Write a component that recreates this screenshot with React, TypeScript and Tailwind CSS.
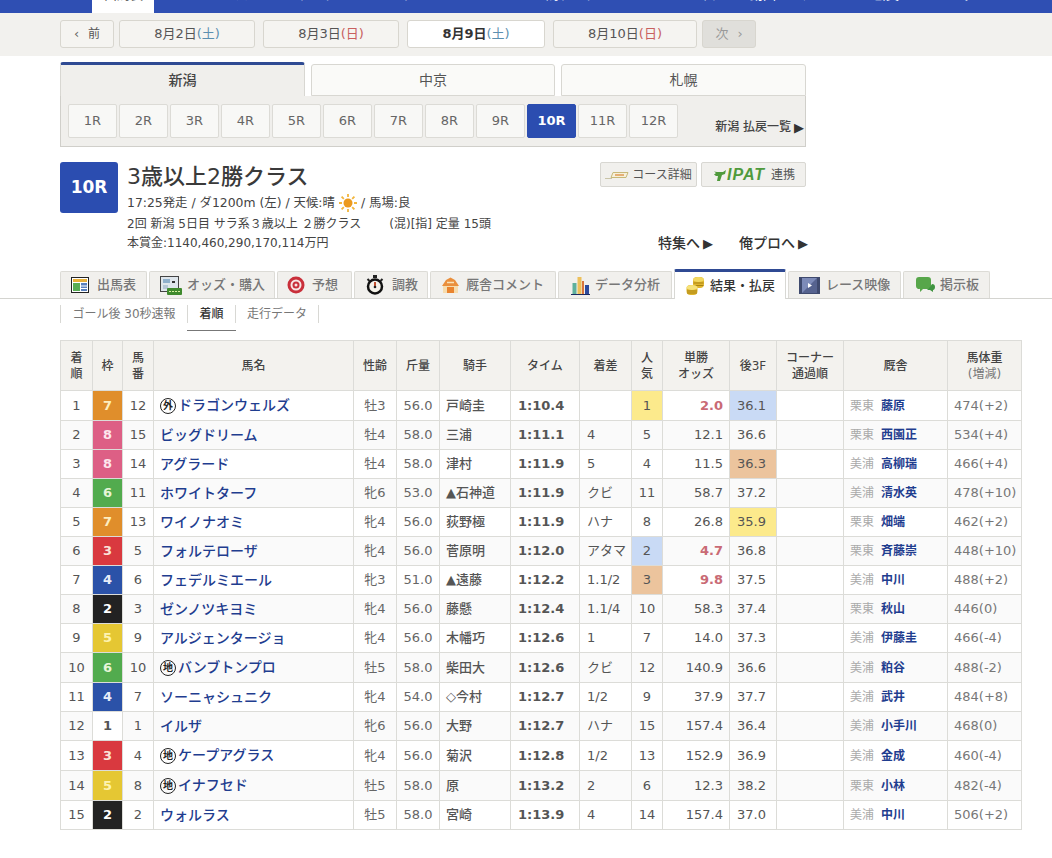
import type { ReactNode } from "react";

const navItems = [
  { label: "TOP", cls: "w-[92px] pl-[68px] text-[12px]" },
  { label: "出馬表", cls: "w-[62px] pl-[12px] bg-white text-[#555]" },
  { label: "レース", cls: "w-[144px] pl-[56px]" },
  { label: "データ", cls: "w-[90px]" },
  { label: "コラム", cls: "w-[158px]" },
  { label: "馬データ", cls: "w-[72px]" },
  { label: "POG", cls: "w-[72px] text-[12px]" },
  { label: "一口", cls: "w-[60px]" },
  { label: "動画", cls: "w-[46px]" },
  { label: "マイページ", cls: "w-[77px]" },
  { label: "会員", cls: "w-[77px]" },
  { label: "ログイン", cls: "w-[60px]" },
];

const raceNums = ["1R", "2R", "3R", "4R", "5R", "6R", "7R", "8R", "9R", "10R", "11R", "12R"];

const wakuColor: Record<number, string> = {
  1: "bg-white text-[#444]",
  2: "bg-[#222222] text-white",
  3: "bg-[#d9393f] text-[#fbe3d8]",
  4: "bg-[#2b52a8] text-[#e6ecf8]",
  5: "bg-[#e5c733] text-[#fdf3b0]",
  6: "bg-[#52ab4e] text-[#e7f5d8]",
  7: "bg-[#e08e2b] text-[#fdeec0]",
  8: "bg-[#dd5f85] text-[#fde6ec]",
};

type Row = {
  rank: number;
  waku: number;
  num: number;
  mark?: string;
  name: string;
  sex: string;
  kg: string;
  jockey: string;
  time: string;
  diff: string;
  pop: number;
  odds: string;
  last: string;
  center: string;
  trainer: string;
  weight: string;
  tall?: boolean;
};

const rows: Row[] = [
  { rank: 1, waku: 7, num: 12, mark: "外", name: "ドラゴンウェルズ", sex: "牡3", kg: "56.0", jockey: "戸崎圭", time: "1:10.4", diff: "", pop: 1, odds: "2.0", last: "36.1", center: "栗東", trainer: "藤原", weight: "474(+2)", tall: true },
  { rank: 2, waku: 8, num: 15, name: "ビッグドリーム", sex: "牡4", kg: "58.0", jockey: "三浦", time: "1:11.1", diff: "4", pop: 5, odds: "12.1", last: "36.6", center: "栗東", trainer: "西園正", weight: "534(+4)" },
  { rank: 3, waku: 8, num: 14, name: "アグラード", sex: "牡4", kg: "58.0", jockey: "津村", time: "1:11.9", diff: "5", pop: 4, odds: "11.5", last: "36.3", center: "美浦", trainer: "高柳瑞", weight: "466(+4)" },
  { rank: 4, waku: 6, num: 11, name: "ホワイトターフ", sex: "牝6", kg: "53.0", jockey: "▲石神道", time: "1:11.9", diff: "クビ", pop: 11, odds: "58.7", last: "37.2", center: "美浦", trainer: "清水英", weight: "478(+10)" },
  { rank: 5, waku: 7, num: 13, name: "ワイノナオミ", sex: "牝4", kg: "56.0", jockey: "荻野極", time: "1:11.9", diff: "ハナ", pop: 8, odds: "26.8", last: "35.9", center: "栗東", trainer: "畑端", weight: "462(+2)" },
  { rank: 6, waku: 3, num: 5, name: "フォルテローザ", sex: "牝4", kg: "56.0", jockey: "菅原明", time: "1:12.0", diff: "アタマ", pop: 2, odds: "4.7", last: "36.8", center: "栗東", trainer: "斉藤崇", weight: "448(+10)" },
  { rank: 7, waku: 4, num: 6, name: "フェデルミエール", sex: "牝3", kg: "51.0", jockey: "▲遠藤", time: "1:12.2", diff: "1.1/2", pop: 3, odds: "9.8", last: "37.5", center: "美浦", trainer: "中川", weight: "488(+2)" },
  { rank: 8, waku: 2, num: 3, name: "ゼンノツキヨミ", sex: "牝4", kg: "56.0", jockey: "藤懸", time: "1:12.4", diff: "1.1/4", pop: 10, odds: "58.3", last: "37.4", center: "栗東", trainer: "秋山", weight: "446(0)" },
  { rank: 9, waku: 5, num: 9, name: "アルジェンタージョ", sex: "牝4", kg: "56.0", jockey: "木幡巧", time: "1:12.6", diff: "1", pop: 7, odds: "14.0", last: "37.3", center: "美浦", trainer: "伊藤圭", weight: "466(-4)" },
  { rank: 10, waku: 6, num: 10, mark: "地", name: "バンブトンプロ", sex: "牡5", kg: "58.0", jockey: "柴田大", time: "1:12.6", diff: "クビ", pop: 12, odds: "140.9", last: "36.6", center: "美浦", trainer: "粕谷", weight: "488(-2)", tall: true },
  { rank: 11, waku: 4, num: 7, name: "ソーニャシュニク", sex: "牝4", kg: "54.0", jockey: "◇今村", time: "1:12.7", diff: "1/2", pop: 9, odds: "37.9", last: "37.7", center: "美浦", trainer: "武井", weight: "484(+8)" },
  { rank: 12, waku: 1, num: 1, name: "イルザ", sex: "牝6", kg: "56.0", jockey: "大野", time: "1:12.7", diff: "ハナ", pop: 15, odds: "157.4", last: "36.4", center: "美浦", trainer: "小手川", weight: "468(0)" },
  { rank: 13, waku: 3, num: 4, mark: "地", name: "ケープアグラス", sex: "牝4", kg: "56.0", jockey: "菊沢", time: "1:12.8", diff: "1/2", pop: 13, odds: "152.9", last: "36.9", center: "美浦", trainer: "金成", weight: "460(-4)", tall: true },
  { rank: 14, waku: 5, num: 8, mark: "地", name: "イナフセド", sex: "牡5", kg: "58.0", jockey: "原", time: "1:13.2", diff: "2", pop: 6, odds: "12.3", last: "38.2", center: "栗東", trainer: "小林", weight: "482(-4)", tall: true },
  { rank: 15, waku: 2, num: 2, name: "ウォルラス", sex: "牡5", kg: "58.0", jockey: "宮崎", time: "1:13.9", diff: "4", pop: 14, odds: "157.4", last: "37.0", center: "美浦", trainer: "中川", weight: "506(+2)" },
];

const popBg: Record<number, string> = { 1: "bg-[#fcea8c]", 2: "bg-[#c9daf5]", 3: "bg-[#ecc49d]" };
const lastBg: Record<string, string> = { "36.1": "bg-[#c9daf5]", "36.3": "bg-[#ecc49d]", "35.9": "bg-[#fcea8c]" };

function DateBtn({ w, children, active }: { w: string; children: ReactNode; active?: boolean }) {
  return (
    <div
      className={`${w} flex h-[28px] items-center justify-center rounded-[3px] border border-[#d8d6cf] text-[13px] ${
        active ? "bg-white font-bold text-[#333]" : "bg-[#f5f4f1] text-[#555]"
      }`}
    >
      {children}
    </div>
  );
}

function Sat() {
  return <span className="font-normal text-[#5b8fb0]">(土)</span>;
}
function Sun() {
  return <span className="font-normal text-[#c8605f]">(日)</span>;
}

function TabIcon({ kind }: { kind: string }) {
  if (kind === "table")
    return (
      <svg width="18" height="16" viewBox="0 0 18 16">
        <rect x="0.5" y="0.5" width="17" height="15" fill="#fff" stroke="#222" />
        <rect x="2" y="2" width="14" height="3" fill="#e8b13a" />
        <rect x="2" y="6" width="7" height="8" fill="#58ad55" />
        <rect x="10" y="6" width="6" height="8" fill="#5a80bd" />
        <path d="M10 9h6M10 11.5h6" stroke="#fff" />
      </svg>
    );
  if (kind === "odds")
    return (
      <svg width="22" height="19" viewBox="0 0 22 19">
        <rect x="0.5" y="0.5" width="18" height="15" fill="#dfe6ec" stroke="#444" />
        <rect x="3" y="3" width="7" height="4" fill="#8fb0cc" />
        <rect x="12" y="5" width="3" height="2" fill="#333" />
        <rect x="3" y="9" width="5" height="4" fill="#b5c6d6" />
        <rect x="7" y="12" width="15" height="7" rx="1" fill="#3f8a2e" />
        <path d="M9 15.5h11" stroke="#d7f0a0" strokeDasharray="2 1" />
      </svg>
    );
  if (kind === "target")
    return (
      <svg width="18" height="18" viewBox="0 0 18 18">
        <circle cx="9" cy="9" r="8.5" fill="#c92f3a" />
        <circle cx="9" cy="9" r="5.5" fill="#f7e6e4" />
        <circle cx="9" cy="9" r="3.5" fill="#c92f3a" />
        <circle cx="9" cy="9" r="1.5" fill="#f7e6e4" />
      </svg>
    );
  if (kind === "watch")
    return (
      <svg width="20" height="20" viewBox="0 0 20 20">
        <rect x="8" y="0" width="4" height="3" fill="#222" />
        <path d="M2.5 4l2 2M17.5 4l-2 2" stroke="#222" strokeWidth="2" />
        <circle cx="10" cy="11.5" r="7" fill="#f5f3ea" stroke="#111" strokeWidth="2.5" />
        <path d="M10 7v5" stroke="#c2502e" strokeWidth="2" />
        <circle cx="10" cy="12" r="1.3" fill="#222" />
      </svg>
    );
  if (kind === "barn")
    return (
      <svg width="19" height="17" viewBox="0 0 19 17">
        <path d="M1 9L5 3 9.5 0.5 14 3 18 9z" fill="#ea8f3c" />
        <rect x="2" y="9" width="15" height="7" fill="#f6dcae" />
        <rect x="6" y="10" width="7" height="6" fill="#e9842f" />
        <path d="M6 5.5h7" stroke="#f9e3b8" strokeWidth="1.5" />
      </svg>
    );
  if (kind === "chart")
    return (
      <svg width="19" height="19" viewBox="0 0 19 19">
        <rect x="1.5" y="7" width="4" height="11" fill="#5eb09c" />
        <rect x="6.5" y="1" width="4" height="17" fill="#edc05a" />
        <rect x="11" y="5" width="2" height="13" fill="#d9743c" />
        <rect x="14" y="9" width="4" height="9" fill="#2e4a9b" />
        <path d="M0 18.5h19" stroke="#1c2c60" />
      </svg>
    );
  if (kind === "coins")
    return (
      <svg width="19" height="19" viewBox="0 0 19 19">
        <rect x="7" y="1" width="11" height="11" rx="4" fill="#e0b62e" />
        <ellipse cx="12.5" cy="3.5" rx="5.5" ry="2.5" fill="#f2d860" />
        <path d="M7.5 7h10M7.5 9.5h10" stroke="#a98312" />
        <rect x="0.5" y="9" width="11" height="10" rx="4" fill="#e0b62e" />
        <ellipse cx="6" cy="11.5" rx="5.5" ry="2.5" fill="#f6e27a" />
        <path d="M1 15h10M1 17h10" stroke="#a98312" />
      </svg>
    );
  if (kind === "film")
    return (
      <svg width="21" height="17" viewBox="0 0 21 17">
        <rect width="21" height="17" fill="#3f4a6e" />
        <rect x="3" y="1" width="15" height="15" fill="#7d8bb8" />
        <path d="M3 16L18 1v15z" fill="#56638f" />
        <path d="M9 6l4 2.5-4 2.5z" fill="#fff" />
      </svg>
    );
  return (
    <svg width="21" height="18" viewBox="0 0 21 18">
      <path d="M4 1h9a3 3 0 0 1 3 3v6a3 3 0 0 1-3 3H8l-3 3v-3.200A3 3 0 0 1 1 10V4a3 3 0 0 1 3-3z" fill="#57a64a" />
      <path d="M17 8a3 3 0 0 1 3 3c0 2-1 3-2 3v2l-3-2h-3l3-3z" fill="#3f9440" />
    </svg>
  );
}

const tabs = [
  { label: "出馬表", icon: "table", cls: "w-[87px]", gap: "gap-[8px] pl-[10px]" },
  { label: "オッズ・購入", icon: "odds", cls: "w-[126px]", gap: "gap-[5px] pl-[10px]" },
  { label: "予想", icon: "target", cls: "w-[75px]", gap: "gap-[7px] pl-[9px]" },
  { label: "調教", icon: "watch", cls: "w-[74px]", gap: "gap-[7px] pl-[10px]" },
  { label: "厩舎コメント", icon: "barn", cls: "w-[126px]", gap: "gap-[6px] pl-[10px]" },
  { label: "データ分析", icon: "chart", cls: "w-[114px]", gap: "gap-[5px] pl-[12px]" },
];

const tabsAfter = [
  { label: "レース映像", icon: "film", cls: "w-[113px]", gap: "gap-[6px] pl-[10px]" },
  { label: "掲示板", icon: "chat", cls: "w-[87px]", gap: "gap-[4px] pl-[11px]" },
];

function Tab({ t, active }: { t: { label: string; icon: string; cls: string; gap: string }; active?: boolean }) {
  return (
    <div
      className={`${t.cls} ${t.gap} flex items-center rounded-t-[2px] text-[13px] font-medium ${
        active
          ? "-mb-px h-[30px] border-x border-t-[3px] border-[#d8d8d4] border-t-[#2f4a93] bg-white text-[#333]"
          : "h-[27px] border border-b-0 border-[#dcdbd6] bg-[#f1f0ed] text-[#777]"
      }`}
    >
      <TabIcon kind={t.icon} />
      <span>{t.label}</span>
    </div>
  );
}

function Mark({ c }: { c: string }) {
  return (
    <span className="mr-[2px] inline-flex h-[16px] w-[16px] shrink-0 items-center justify-center rounded-full border-[1.5px] border-[#222] text-[10px] font-bold leading-none text-[#222]">
      {c}
    </span>
  );
}

export default function App() {
  const th = "border border-[#dcdcd8] bg-[#f3f2ee] text-center text-[12px] font-medium leading-[16px] text-[#444]";
  const td = "border border-[#dcdcd8] p-0 text-[13px] text-[#555]";
  return (
    <div className="min-h-[858px] w-[1052px] overflow-hidden bg-white font-['DejaVu_Sans','Noto_Sans_CJK_JP',sans-serif] text-[#444]">
      {/* top nav, cut off by the screenshot */}
      <div className="flex h-[13px] overflow-hidden bg-[#2f4fb3] text-[13px] leading-[13px] text-white">
        {navItems.map((n) => (
          <div key={n.label} className={`${n.cls} h-[13px] shrink-0 whitespace-nowrap`}>
            <span className="block -translate-y-[12px]">{n.label}</span>
          </div>
        ))}
      </div>

      {/* date bar */}
      <div className="flex h-[43px] items-start bg-[#f2f1ee] pl-[60px] pt-[7px]">
        <DateBtn w="w-[54px]">
          <span className="mr-[9px] text-[#666]">‹</span>
          <span className="text-[12px]">前</span>
        </DateBtn>
        <div className="ml-[5px]">
          <DateBtn w="w-[136px]">
            8月2日
            <Sat />
          </DateBtn>
        </div>
        <div className="ml-[8px]">
          <DateBtn w="w-[136px]">
            8月3日
            <Sun />
          </DateBtn>
        </div>
        <div className="ml-[8px]">
          <DateBtn w="w-[138px]" active>
            8月9日
            <Sat />
          </DateBtn>
        </div>
        <div className="ml-[8px]">
          <DateBtn w="w-[144px]">
            8月10日
            <Sun />
          </DateBtn>
        </div>
        <div className="ml-[5px] flex h-[28px] w-[54px] items-center justify-center rounded-[3px] border border-[#d8d6cf] bg-[#e0dfdb] text-[13px] text-[#999]">
          次<span className="ml-[9px]">›</span>
        </div>
      </div>

      {/* venue tabs */}
      <div className="ml-[60px] mt-[7px] w-[746px]">
        <div className="flex h-[33px] items-end">
          <div className="flex h-[34px] w-[245px] items-center justify-center rounded-t-[3px] border-x border-t-[3px] border-x-[#d8d7d2] border-t-[#2f4a93] bg-[#f0efec] text-[14px] font-medium text-[#444]">
            新潟
          </div>
          <div className="ml-[6px] flex h-[32px] w-[244px] items-center justify-center rounded-t-[3px] border border-[#d8d7d2] bg-[#fafaf8] text-[14px] text-[#555]">
            中京
          </div>
          <div className="ml-[6px] flex h-[32px] w-[245px] items-center justify-center rounded-t-[3px] border border-[#d8d7d2] bg-[#fafaf8] text-[14px] text-[#555]">
            札幌
          </div>
        </div>
        <div className="flex h-[51px] gap-[2px] border border-t-0 border-[#d0cfca] bg-[#f0efec] pl-[7px] pt-[8px]">
          {raceNums.map((r) => (
            <div
              key={r}
              className={`flex h-[34px] w-[49px] items-center justify-center rounded-[2px] border text-[13px] ${
                r === "10R"
                  ? "border-[#2b4db0] bg-[#2b4db0] font-bold text-white"
                  : "border-[#dcdbd6] bg-[#f8f8f6] text-[#666]"
              }`}
            >
              {r}
            </div>
          ))}
          <div className="ml-auto mt-[15px] flex h-[16px] items-center pr-[1px] text-[12px] font-medium text-[#444]">
            新潟 払戻一覧
            <span className="ml-[3px] text-[13px] leading-none text-[#333]">▶</span>
          </div>
        </div>
      </div>

      {/* race header */}
      <div className="ml-[60px] mt-[15px] flex h-[92px] w-[746px] items-start">
        <div className="flex h-[51px] w-[58px] shrink-0 items-center justify-center rounded-[3px] bg-[#2b4db0] text-[17px] font-bold text-white">
          10R
        </div>
        <div className="ml-[9px] flex-1">
          <div className="flex h-[28px] items-start justify-between">
            <div className="text-[22px] font-medium leading-[30px] text-[#3a3a3a]">3歳以上2勝クラス</div>
            <div className="flex gap-[4px]">
              <div className="flex h-[25px] w-[97px] items-center justify-center gap-[3px] rounded-[2px] border border-[#d8d7d2] bg-[#f1f0ed] text-[12px] text-[#555]">
                <svg width="24" height="8" viewBox="0 0 24 8">
                  <path d="M0 7.5h7" stroke="#c9c4a8" />
                  <path d="M8 1.5h15l-2 5H6z" fill="#f6f0da" stroke="#c8b878" />
                  <path d="M10 4h9" stroke="#df9a55" strokeWidth="1.5" />
                </svg>
                コース詳細
              </div>
              <div className="flex h-[25px] w-[105px] items-center justify-center gap-[6px] rounded-[2px] border border-[#d8d7d2] bg-[#f1f0ed] text-[12px] text-[#555]">
                <span className="flex items-center">
                  <svg width="15" height="12" viewBox="0 0 15 12">
                    <path d="M0 1l2 1.5 3 0.5h6l3-2-1 4-3 1-2 6H5l1-5H4L2 5.5 4 4z" fill="#4f9a3c" />
                  </svg>
                  <span className="font-['Liberation_Sans',sans-serif] text-[16px] font-bold italic leading-none tracking-[1px] text-[#4f9a3c]">
                    IPAT
                  </span>
                </span>
                連携
              </div>
            </div>
          </div>
          <div className="mt-[3px] flex h-[20px] items-center text-[12.4px] text-[#444]">
            17:25発走 / ダ1200m (左) / 天候:晴
            <svg className="mx-[4px]" width="18" height="18" viewBox="0 0 18 18">
              <circle cx="9" cy="9" r="4.5" fill="#ec9a1e" />
              <path
                d="M9 0v3M9 15v3M0 9h3M15 9h3M2.6 2.6l2.2 2.2M13.2 13.2l2.2 2.2M2.6 15.4l2.2-2.2M13.2 4.8l2.2-2.2"
                stroke="#f2b63d"
                strokeWidth="1.8"
              />
            </svg>
            / 馬場:良
          </div>
          <div className="mt-[2px] flex h-[18px] items-center text-[12px] text-[#444]">
            <span>2回 新潟 5日目 サラ系３歳以上 ２勝クラス</span>
            <span className="ml-[28px]">(混)[指] 定量 15頭</span>
          </div>
          <div className="-mr-[2px] flex h-[20px] items-center justify-between text-[12px] text-[#444]">
            <span>本賞金:1140,460,290,170,114万円</span>
            <span className="flex gap-[26px] text-[14px] font-medium text-[#333]">
              <span className="flex items-center">
                特集へ<span className="ml-[3px] text-[13px] leading-none">▶</span>
              </span>
              <span className="flex items-center">
                俺プロへ<span className="ml-[3px] text-[13px] leading-none">▶</span>
              </span>
            </span>
          </div>
        </div>
      </div>

      {/* main tabs */}
      <div className="mt-[15px] flex h-[30px] items-end border-b border-[#d4d4d0] pl-[60px]">
        <div className="flex items-end gap-[2px]">
          {tabs.map((t) => (
            <Tab key={t.label} t={t} />
          ))}
          <Tab t={{ label: "結果・払戻", icon: "coins", cls: "w-[112px]", gap: "gap-[5px] pl-[11px]" }} active />
          {tabsAfter.map((t) => (
            <Tab key={t.label} t={t} />
          ))}
        </div>
      </div>

      {/* sub tabs */}
      <div className="ml-[60px] mt-[6px] flex h-[26px] items-start text-[12px]">
        <div className="flex h-[18px] w-[127px] items-center justify-center border-l border-[#d8d8d4] text-[#777]">
          ゴール後 30秒速報
        </div>
        <div className="h-[26px] w-[49px] border-b border-[#777]">
          <div className="flex h-[18px] items-center justify-center border-x border-[#d8d8d4] font-medium text-[#333]">
            着順
          </div>
        </div>
        <div className="flex h-[18px] w-[83px] items-center justify-center border-r border-[#d8d8d4] text-[#777]">
          走行データ
        </div>
      </div>

      {/* result table */}
      <table className="ml-[60px] mt-[9px] w-[961px] table-fixed border-collapse">
        <colgroup>
          <col className="w-[32px]" />
          <col className="w-[30px]" />
          <col className="w-[31px]" />
          <col className="w-[200px]" />
          <col className="w-[43px]" />
          <col className="w-[43px]" />
          <col className="w-[71px]" />
          <col className="w-[69px]" />
          <col className="w-[52px]" />
          <col className="w-[31px]" />
          <col className="w-[67px]" />
          <col className="w-[47px]" />
          <col className="w-[67px]" />
          <col className="w-[104px]" />
          <col className="w-[74px]" />
        </colgroup>
        <thead>
          <tr className="h-[50px]">
            <th className={th}>
              着<br />順
            </th>
            <th className={th}>枠</th>
            <th className={th}>
              馬<br />番
            </th>
            <th className={th}>馬名</th>
            <th className={th}>性齢</th>
            <th className={th}>斤量</th>
            <th className={th}>騎手</th>
            <th className={th}>タイム</th>
            <th className={th}>着差</th>
            <th className={th}>
              人<br />気
            </th>
            <th className={th}>
              単勝<br />オッズ
            </th>
            <th className={th}>後3F</th>
            <th className={th}>
              コーナー<br />通過順
            </th>
            <th className={th}>厩舎</th>
            <th className={th}>
              馬体重
              <br />
              <span className="font-normal text-[#777]">(増減)</span>
            </th>
          </tr>
        </thead>
        <tbody>
          {rows.map((r) => (
            <tr key={r.rank} className={`${r.tall ? "h-[30px]" : "h-[29px]"} ${r.rank % 2 === 0 ? "bg-[#fafafa]" : "bg-white"}`}>
              <td className={`${td} text-center text-[#444]`}>{r.rank}</td>
              <td className={`${td} text-center font-bold ${wakuColor[r.waku]}`}>{r.waku}</td>
              <td className={`${td} text-center text-[#444]`}>{r.num}</td>
              <td className={`${td} pl-[6px]`}>
                <div className="flex items-center whitespace-nowrap text-[14px] font-medium text-[#1f3d8f]">
                  {r.mark && <Mark c={r.mark} />}
                  {r.name}
                </div>
              </td>
              <td className={`${td} text-center text-[#666]`}>{r.sex}</td>
              <td className={`${td} text-center text-[#666]`}>{r.kg}</td>
              <td className={`${td} whitespace-nowrap pl-[6px] font-medium text-[#1f3d8f]`}>{r.jockey}</td>
              <td className={`${td} pl-[7px] font-bold text-[#555]`}>{r.time}</td>
              <td className={`${td} whitespace-nowrap pl-[7px]`}>{r.diff}</td>
              <td className={`${td} text-center ${popBg[r.pop] ?? ""}`}>{r.pop}</td>
              <td className={`${td} pr-[6px] text-right ${r.pop <= 3 ? "font-bold text-[#c96a75]" : "text-[#444]"}`}>
                {r.odds}
              </td>
              <td className={`${td} pl-[7px] ${lastBg[r.last] ?? ""}`}>{r.last}</td>
              <td className={td} />
              <td className={`${td} pl-[6px]`}>
                <div className="flex items-center">
                  <span className="w-[31px] text-[12px] text-[#aaa]">{r.center}</span>
                  <span className="text-[12px] font-bold text-[#1f3d8f]">{r.trainer}</span>
                </div>
              </td>
              <td className={`${td} whitespace-nowrap pl-[6px] text-[11.5px] text-[#777]`}>{r.weight}</td>
            </tr>
          ))}
        </tbody>
      </table>
    </div>
  );
}
